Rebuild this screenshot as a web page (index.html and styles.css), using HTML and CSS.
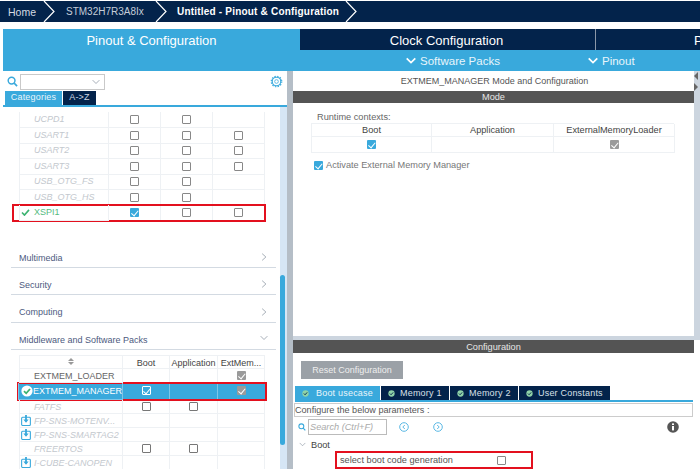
FILE: index.html
```html
<!DOCTYPE html>
<html>
<head>
<meta charset="utf-8">
<title>Pinout &amp; Configuration</title>
<link rel="stylesheet" href="styles.css">
</head>
<body>
<svg class="defs" width="0" height="0">
  <symbol id="crumb" viewBox="0 0 14 21"><path d="M1 0 L11 10.5 L1 21" fill="none" stroke="#fff" stroke-width="1.2"/></symbol>
  <symbol id="chev-r" viewBox="0 0 8 10"><path d="M1.5 .5 L6.5 5 L1.5 9.5" fill="none" stroke="#8a94a0" stroke-width="1"/></symbol>
  <symbol id="chev-d" viewBox="0 0 10 8"><path d="M.5 1.5 L5 6 L9.5 1.5" fill="none" stroke="#8a94a0" stroke-width="1"/></symbol>
  <symbol id="chev-w" viewBox="0 0 10 8"><path d="M.7 1.3 L5 5.6 L9.3 1.3" fill="none" stroke="#fff" stroke-width="1.7"/></symbol>
  <symbol id="search" viewBox="0 0 12 12"><circle cx="5" cy="5" r="3.7" fill="none" stroke="#39a9dc" stroke-width="1.6"/><path d="M7.8 7.8 L11 11" stroke="#39a9dc" stroke-width="1.8"/></symbol>
  <symbol id="dl" viewBox="0 0 11 12"><rect x=".7" y="2.5" width="9.6" height="9" rx="1" fill="none" stroke="#39a9dc" stroke-width="1.2"/><path d="M5.5 0 V7" stroke="#39a9dc" stroke-width="2"/><path d="M2.6 5 L5.5 8.5 L8.4 5 Z" fill="#39a9dc"/></symbol>
  <symbol id="ok" viewBox="0 0 10 10"><circle cx="5" cy="5" r="4.5" fill="#8fd3a8"/><path d="M2.7 5 L4.4 6.8 L7.4 3.4" fill="none" stroke="#03234b" stroke-width="1.3"/></symbol>
  <symbol id="circ-l" viewBox="0 0 10 10"><circle cx="5" cy="5" r="4.3" fill="none" stroke="#5ab8e4" stroke-width="1"/><path d="M5.8 3 L3.8 5 L5.8 7" fill="none" stroke="#5ab8e4"/></symbol>
  <symbol id="circ-r" viewBox="0 0 10 10"><circle cx="5" cy="5" r="4.3" fill="none" stroke="#5ab8e4" stroke-width="1"/><path d="M4.2 3 L6.2 5 L4.2 7" fill="none" stroke="#5ab8e4"/></symbol>
</svg>

<nav class="crumbs">
  <span class="crumb home">Home</span><svg class="crumb-arrow"><use href="#crumb"/></svg>
  <span class="crumb mcu">STM32H7R3A8Ix</span><svg class="crumb-arrow"><use href="#crumb"/></svg>
  <span class="crumb current">Untitled - Pinout &amp; Configuration</span><svg class="crumb-arrow"><use href="#crumb"/></svg>
</nav>

<header class="tabs">
  <div class="tab-pinout">Pinout &amp; Configuration</div>
  <div class="tab-side">
    <div class="tab-top">
      <div class="tab-clock">Clock Configuration</div>
      <div class="tab-project">P</div>
    </div>
    <div class="tab-sub">
      <span class="sub-packs"><svg class="sub-chev"><use href="#chev-w"/></svg>Software Packs</span>
      <span class="sub-pinout"><svg class="sub-chev"><use href="#chev-w"/></svg>Pinout</span>
    </div>
  </div>
</header>

<main class="main">
  <section class="left">
    <div class="left-head">
      <div class="tools">
        <svg class="ic-search"><use href="#search"/></svg>
        <div class="select"><svg class="select-chev"><use href="#chev-d"/></svg></div>
        <svg class="gear" viewBox="0 0 14 14"><circle cx="7" cy="7" r="4.6" fill="none" stroke="#39a9dc" stroke-width="1.2" /><circle cx="7" cy="7" r="5.7" fill="none" stroke="#39a9dc" stroke-width="1.2" stroke-dasharray="1.6 1.38"/><circle cx="7" cy="7" r="2" fill="none" stroke="#39a9dc" stroke-width=".8"/></svg>
      </div>
      <div class="cat-tabs"><span class="cat on">Categories</span><span class="cat">A-&gt;Z</span></div>
    </div>
    <div class="left-scroller">
      <div class="left-body">
        <div class="grid-a">
          <div class="ra"><span class="na">UCPD1</span><i class="c"><b class="cb"></b></i><i class="c"><b class="cb"></b></i><i class="c"></i></div>
          <div class="ra"><span class="na">USART1</span><i class="c"><b class="cb"></b></i><i class="c"><b class="cb"></b></i><i class="c"><b class="cb"></b></i></div>
          <div class="ra"><span class="na">USART2</span><i class="c"><b class="cb"></b></i><i class="c"><b class="cb"></b></i><i class="c"><b class="cb"></b></i></div>
          <div class="ra"><span class="na">USART3</span><i class="c"><b class="cb"></b></i><i class="c"><b class="cb"></b></i><i class="c"><b class="cb"></b></i></div>
          <div class="ra"><span class="na">USB_OTG_FS</span><i class="c"><b class="cb"></b></i><i class="c"><b class="cb"></b></i><i class="c"></i></div>
          <div class="ra"><span class="na">USB_OTG_HS</span><i class="c"><b class="cb"></b></i><i class="c"><b class="cb"></b></i><i class="c"></i></div>
          <div class="ra xspi"><span class="na green"><svg class="tick" viewBox="0 0 10 8"><path d="M1 4 L3.8 7 L9 1" fill="none" stroke="#3cb371" stroke-width="1.8"/></svg>XSPI1</span><i class="c"><b class="cb on"></b></i><i class="c"><b class="cb"></b></i><i class="c"><b class="cb"></b></i></div>
        </div>

        <div class="acc first">Multimedia<svg class="acc-r"><use href="#chev-r"/></svg></div>
        <div class="acc">Security<svg class="acc-r"><use href="#chev-r"/></svg></div>
        <div class="acc">Computing<svg class="acc-r"><use href="#chev-r"/></svg></div>
        <div class="acc">Middleware and Software Packs<svg class="acc-d"><use href="#chev-d"/></svg></div>

        <div class="grid-b">
          <div class="rb head"><span class="sort"><em class="up"></em><em class="down"></em></span><span class="hc">Boot</span><span class="hc">Application</span><span class="hc">ExtMem...</span></div>
          <div class="rb"><span class="nb dark">EXTMEM_LOADER</span><i class="c"></i><i class="c"></i><i class="c"><b class="cb grey"></b></i></div>
          <div class="rb sel"><span class="nb white"><svg class="big-ok" viewBox="0 0 12 12"><circle cx="6" cy="6" r="5.6" fill="#fff"/><path d="M3 6.2 L5.2 8.3 L9 4" fill="none" stroke="#3cb371" stroke-width="1.8"/></svg>EXTMEM_MANAGER</span><i class="c"><b class="cb sel-on"></b></i><i class="c"></i><i class="c"><b class="cb grey"></b></i></div>
          <div class="rb"><span class="nb">FATFS</span><i class="c"><b class="cb dk"></b></i><i class="c"><b class="cb dk"></b></i><i class="c"></i></div>
          <div class="rb"><span class="nb"><svg class="dl"><use href="#dl"/></svg>FP-SNS-MOTENV...</span><i class="c"></i><i class="c"></i><i class="c"></i></div>
          <div class="rb"><span class="nb"><svg class="dl"><use href="#dl"/></svg>FP-SNS-SMARTAG2</span><i class="c"></i><i class="c"></i><i class="c"></i></div>
          <div class="rb"><span class="nb">FREERTOS</span><i class="c"><b class="cb dk"></b></i><i class="c"><b class="cb dk"></b></i><i class="c"></i></div>
          <div class="rb"><span class="nb"><svg class="dl"><use href="#dl"/></svg>I-CUBE-CANOPEN</span><i class="c"></i><i class="c"></i><i class="c"></i></div>
        </div>
      </div>
      <div class="scroll"><div class="thumb"></div></div>
    </div>
  </section>

  <div class="splitter"></div>

  <section class="right">
    <div class="mode-pane">
      <div class="pane-col">
        <h1 class="pane-title">EXTMEM_MANAGER Mode and Configuration</h1>
        <div class="bar">Mode</div>
        <div class="mode-body">
          <div class="rt-label">Runtime contexts:</div>
          <div class="rt-table">
            <span class="rt-h">Boot</span><span class="rt-h">Application</span><span class="rt-h">ExternalMemoryLoader</span>
            <span class="rt-c"><b class="cb on"></b></span><span class="rt-c"></span><span class="rt-c"><b class="cb grey"></b></span>
          </div>
          <label class="activate"><b class="cb on"></b>Activate External Memory Manager</label>
        </div>
      </div>
      <div class="mini-scroll"><em class="arr-l"></em><em class="arr-r"></em></div>
    </div>
    <div class="h-split"></div>
    <div class="config-pane">
      <div class="bar config-bar">Configuration</div>
      <button class="reset">Reset Configuration</button>
      <div class="cfg-tabs">
        <span class="cfg on w1"><svg class="ok"><use href="#ok"/></svg>Boot usecase</span>
        <span class="cfg w2"><svg class="ok"><use href="#ok"/></svg>Memory 1</span>
        <span class="cfg w2"><svg class="ok"><use href="#ok"/></svg>Memory 2</span>
        <span class="cfg w3"><svg class="ok"><use href="#ok"/></svg>User Constants</span>
      </div>
      <div class="cfg-note">Configure the below parameters :</div>
      <div class="cfg-search">
        <svg class="ic-search small"><use href="#search"/></svg>
        <div class="search-box">Search (Ctrl+F)</div>
        <svg class="circ first-c"><use href="#circ-l"/></svg>
        <svg class="circ second-c"><use href="#circ-r"/></svg>
        <svg class="info" viewBox="0 0 12 12"><circle cx="6" cy="6" r="5.8" fill="#555"/><rect x="5" y="5" width="2" height="4.4" fill="#fff"/><rect x="5" y="2.4" width="2" height="1.6" fill="#fff"/></svg>
      </div>
      <div class="boot-row"><svg class="boot-chev"><use href="#chev-d"/></svg>Boot</div>
      <div class="param">select boot code generation<b class="cb"></b></div>
    </div>
  </section>
</main>
</body>
</html>
```

FILE: styles.css
```css
* { box-sizing: border-box; }
html, body { margin: 0; padding: 0; }
body {
  width: 700px; height: 469px; overflow: hidden; background: #fff;
  font-family: "Liberation Sans", Arial, sans-serif; color: #555;
  padding-top: 1px;
}
.defs { position: absolute; }
i, em { display: block; font-style: normal; }

.crumbs {
  height: 21px; background: #03234b; display: flex; align-items: center;
  color: #fff; font-size: 10.5px; white-space: nowrap;
}
.crumb { display: block; }
.crumb-arrow { width: 14px; height: 21px; flex: none; }
.home { margin-left: 8px; width: 35px; color: #d5dbe3; }
.mcu { margin-left: 9px; width: 89px; color: #c5cdd8; font-size: 10px; }
.current { margin-left: 8px; width: 168px; font-weight: bold; font-size: 10px; letter-spacing: .2px; }

.tabs { display: flex; margin: 7px 0 0 3px; height: 42px; }
.tab-pinout {
  width: 297px; background: #39a9dc; color: #fff; font-size: 13px;
  text-align: center; padding-top: 4px;
}
.tab-side { flex: 1; min-width: 0; display: flex; flex-direction: column; }
.tab-top { display: flex; height: 21px; background: #03234b; color: #fff; font-size: 13px; overflow: hidden; white-space: nowrap; }
.tab-clock { width: 296px; flex: none; text-align: center; border-right: 1px solid #8b97a8; line-height: 23px; padding-right: 2px; }
.tab-project { padding-left: 98px; line-height: 23px; flex: none; }
.tab-sub { height: 21px; background: #39a9dc; display: flex; color: #e8f5fb; font-size: 11.5px; line-height: 22px; white-space: nowrap; }
.sub-chev { width: 10px; height: 8px; margin-right: 4px; }
.sub-packs { margin-left: 106px; width: 182px; }
.main { display: flex; margin-left: 3px; height: 398px; overflow: hidden; }

.left { width: 284px; display: flex; flex-direction: column; flex: none; }
.left-head { flex: none; border-bottom: 2px solid #39a9dc; }
.left-scroller { flex: 1; min-height: 0; display: flex; }
.left-body { width: 277px; flex: none; }
.scroll { width: 7px; background: #d6e6f5; padding-top: 168px; }
.thumb { width: 5px; height: 170px; background: #39a9dc; border-radius: 3px; }
.splitter { width: 6px; background: #b5bec7; flex: none; }

.tools { display: flex; align-items: center; height: 20px; padding-top: 1px; }
.ic-search { width: 11px; height: 11px; margin-left: 4px; margin-right: 2px; flex: none; }
.select { width: 85px; height: 16px; border: 1px solid #c9c9c9; position: relative; }
.select-chev { position: absolute; right: 4px; top: 4px; width: 8px; height: 6px; }
.gear { width: 13px; height: 13px; margin-left: auto; margin-right: 4px; }

.cat-tabs { display: flex; gap: 1px; margin-left: 2px; height: 14px; font-size: 9px; letter-spacing: .2px; }
.cat { width: 33px; background: #03234b; color: #cfd8e3; text-align: center; line-height: 13px; }
.cat.on { width: 57px; background: #39a9dc; color: #e8f5fb; }

.grid-a { padding: 5px 0 0 10px; }
.ra {
  display: grid; grid-template-columns: 96px 52px 52px 52px; height: 15.5px;
  width: 252px; font-size: 9px;
}
.ra > * { border: 1px solid #eef1f4; border-width: 0 1px 1px 0; }
.na { padding-left: 14px; font-style: italic; color: #c3c8ce; line-height: 15px; white-space: nowrap; border-left: 1px solid #eef1f4 !important; margin-left: 6px; }
.c { display: flex; align-items: center; justify-content: center; }
.xspi { outline: 2px solid #e3101e; outline-offset: -1px; height: 16px; }
.green { color: #55bb80; font-style: normal; position: relative; }
.tick { position: absolute; left: 1px; top: 4px; width: 9px; height: 7px; }

.cb { display: block; width: 9px; height: 9px; border: 1px solid #888; background: #fff; position: relative; flex: none; border-radius: 1px; }
.cb.dk { border-color: #777; }
.cb.on, .cb.grey { border: 0; }
.cb.on { background: #39a9dc; }
.cb.grey { background: #9a9a9a; }
.cb.sel-on { background: #39a9dc; border: 1px solid #fff; }
.cb.on::after, .cb.grey::after, .cb.sel-on::after {
  content: ""; position: absolute; left: 3px; top: 1px; width: 3px; height: 5.5px;
  border: solid #fff; border-width: 0 1.3px 1.3px 0; transform: rotate(40deg);
}
.cb.sel-on::after { left: 2px; top: 0; }

.acc {
  height: 27.3px; margin: 0 4px 0 8px; padding: 9px 0 0 8px; font-size: 9px; color: #4d5a80;
  border-bottom: 1px solid #d3dae2; position: relative; line-height: 16px;
}
.acc.first { margin-top: 18px; height: 29px; padding-top: 11px; }
.acc-r, .acc-d { position: absolute; right: 9px; bottom: 6px; }
.acc-r { width: 6px; height: 8px; }
.acc-d { width: 8px; height: 6px; right: 8px; bottom: 8px; }

.grid-b { margin: 5px 0 0 16px; width: 246px; font-size: 9px; }
.rb {
  display: grid; grid-template-columns: 104px 47px 48px 47px; height: 14px; color: #555;
}
.rb > * { border: 1px solid #eef1f4; border-width: 0 1px 1px 0; min-width: 0; }
.rb > :first-child { border-left-width: 1px; }
.head { border-top: 1px solid #eef1f4; }
.hc { text-align: center; color: #444; line-height: 14px; white-space: nowrap; overflow: hidden; }
.sort { display: flex; flex-direction: column; align-items: center; justify-content: center; gap: 1px; }
.up { border: 3px solid transparent; border-top: 0; border-bottom: 3px solid #999; }
.down { border: 3px solid transparent; border-bottom: 0; border-top: 3px solid #999; }
.nb { padding: 1px 0 0 14px; font-style: italic; color: #c3c8ce; line-height: 12px; position: relative; white-space: nowrap; overflow: hidden; }
.dark { font-style: normal; color: #666; }
.rb.sel { height: 17px; background: #39a9dc; outline: 2px solid #e3101e; outline-offset: -1px; margin-left: -1px; width: 248px; grid-template-columns: 105px 47px 48px 48px; }
.sel > * { border-color: #7cc6e8; }
.white { color: #fff; font-style: normal; line-height: 15px; }
.big-ok { position: absolute; left: 2px; top: 2px; width: 12px; height: 12px; }
.dl { position: absolute; left: 1px; top: 1px; width: 10px; height: 11px; }

.right { flex: 1; min-width: 0; display: flex; flex-direction: column; }
.mode-pane { height: 265px; display: flex; }
.pane-col { flex: 1; min-width: 0; }
.mini-scroll { width: 6px; background: #ccd5df; flex: none; display: flex; flex-direction: column; }
.arr-l { width: 0; height: 0; margin: 1px 0 3px; border: 4px solid transparent; border-left: 0; border-right: 4px solid #666; }
.arr-r { width: 0; height: 0; border: 4px solid transparent; border-right: 0; border-left: 4px solid #666; }
.pane-title { margin: 0; height: 20px; font-size: 9px; font-weight: normal; text-align: center; line-height: 20px; color: #555; padding-left: 2px; }
.bar { height: 12px; background: #545454; color: #e6e6e6; font-size: 9.2px; line-height: 12px; text-align: center; }
.mode-body { padding: 9px 0 0 18px; font-size: 9.2px; }
.rt-label { color: #666; margin-left: 6px; line-height: 11px; height: 11px; }
.rt-table {
  display: grid; grid-template-columns: 120px 122px 121px; grid-template-rows: 13px 16px; width: 363px;
  border: 1px solid #eef1f4; border-width: 1px 0 0 1px;
}
.rt-h, .rt-c { border: 1px solid #eef1f4; border-width: 0 1px 1px 0; display: flex; align-items: center; justify-content: center; color: #444; }
.activate { display: flex; align-items: center; gap: 3px; margin: 7px 0 0 3px; color: #777; line-height: 10px; }

.h-split { height: 4px; background: #ccd5df; flex: none; }
.config-pane { flex: 1; }
.config-bar { height: 13px; width: 401px; line-height: 14px; }
.reset { display: block; width: 102px; height: 18px; margin: 8px 0 7px 8px; border: 0; background: #9ba1a7; color: #eee; font: 9px "Liberation Sans", Arial, sans-serif; padding: 0; }
.cfg-tabs { display: flex; gap: 1px; height: 16px; border-bottom: 2px solid #39a9dc; margin-left: 2px; width: 398px; font-size: 9px; letter-spacing: .2px; }
.cfg { display: flex; align-items: center; background: #03234b; color: #d9e0e8; padding-left: 7px; height: 14px; white-space: nowrap; }
.cfg.on { background: #39a9dc; color: #eaf6fb; }
.cfg.on .ok { margin-right: 7px; }
.w1 { width: 85px; } .w2 { width: 68px; } .w3 { width: 91px; }
.ok { width: 7px; height: 7px; margin-right: 5px; flex: none; }
.cfg-note { margin: 1px 0 0 1px; width: 399px; height: 14px; border: 1px solid #ccc; font-size: 9.1px; color: #555; line-height: 12px; white-space: nowrap; }
.cfg-search { display: flex; align-items: center; height: 16px; margin-top: 2px; }
.ic-search.small { width: 8px; height: 8px; margin: 0 2px 0 5px; }
.search-box { width: 79px; height: 16px; border: 1px solid #bbb; font-size: 9.2px; font-style: italic; color: #aaa; line-height: 14px; padding-left: 1px; white-space: nowrap; }
.circ { width: 10px; height: 10px; flex: none; }
.first-c { margin-left: 12px; }
.second-c { margin-left: 24px; }
.info { width: 12px; height: 12px; margin-left: 224px; flex: none; }
.boot-row { display: flex; align-items: center; height: 13px; margin: 3px 0 0 6px; font-size: 9.2px; color: #444; }
.boot-chev { width: 7px; height: 5px; margin-right: 5px; }
.param {
  display: flex; align-items: center; justify-content: space-between; width: 198px; height: 18px;
  margin-left: 42px; padding: 0 25px 0 3px; border: 2px solid #e3101e; font-size: 9.2px; color: #555;
  white-space: nowrap;
}
```
